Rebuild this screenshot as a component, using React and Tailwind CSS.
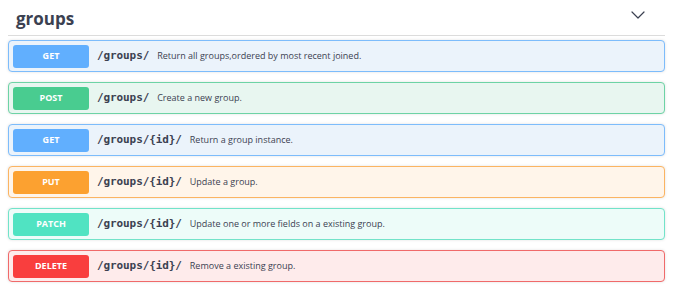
import { ChevronDown } from "lucide-react";

const ops = [
  { method: "GET", path: "/groups/", desc: "Return all groups,ordered by most recent joined.", row: "bg-[#ebf3fb] border-[#7dbcfb]", badge: "bg-[#61affe]" },
  { method: "POST", path: "/groups/", desc: "Create a new group.", row: "bg-[#e8f6f0] border-[#6dd3a5]", badge: "bg-[#49cc90]" },
  { method: "GET", path: "/groups/{id}/", desc: "Return a group instance.", row: "bg-[#ebf3fb] border-[#7dbcfb]", badge: "bg-[#61affe]" },
  { method: "PUT", path: "/groups/{id}/", desc: "Update a group.", row: "bg-[#fff5ea] border-[#fbb462]", badge: "bg-[#fca130]" },
  { method: "PATCH", path: "/groups/{id}/", desc: "Update one or more fields on a existing group.", row: "bg-[#edfcf9] border-[#72e3c9]", badge: "bg-[#50e3c2]" },
  { method: "DELETE", path: "/groups/{id}/", desc: "Remove a existing group.", row: "bg-[#feebeb] border-[#f06a6a]", badge: "bg-[#f93e3e]" },
];

export default function App() {
  return (
    <div className="w-[679px] h-[290px] bg-white px-2 pt-[5px] font-['Open_Sans',sans-serif] text-[#3b4151]">
      {/* Tag header */}
      <div className="flex items-center justify-between h-[31px] pl-2 pr-[15px] border-b border-[#dcdcdc] w-[657px]">
        <h2 className="text-[17px] font-bold leading-none -mt-[3px]">groups</h2>
        <ChevronDown className="w-6 h-6 -mt-[10px] text-[#3b4151]" strokeWidth={1.2} />
      </div>

      {/* Operations */}
      <div className="flex flex-col gap-[10px] mt-[4px] w-[657px]">
        {ops.map((op, i) => (
          <div
            key={i}
            className={`flex items-center h-[32px] border rounded-[4px] px-[4px] shadow-[0_0_3px_rgba(0,0,0,0.12)] ${op.row}`}
          >
            <span
              className={`w-[76px] h-[23px] flex items-center justify-center rounded-[3px] text-white text-[9px] font-bold ${op.badge}`}
            >
              {op.method}
            </span>
            <span className="ml-[8px] font-['DejaVu_Sans_Mono',monospace] font-bold text-[11px] tracking-[-0.1px]">
              {op.path}
            </span>
            <span className="ml-[8px] text-[9px]">{op.desc}</span>
          </div>
        ))}
      </div>
    </div>
  );
}
